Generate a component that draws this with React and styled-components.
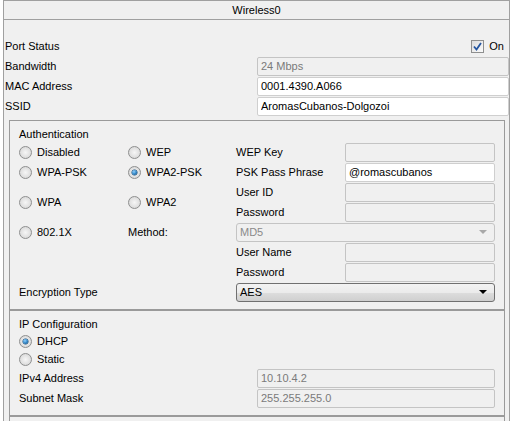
import React from "react";
import styled, { createGlobalStyle, css } from "styled-components";

const GlobalStyle = createGlobalStyle`
  html, body { margin: 0; padding: 0; background: #ffffff; overflow: hidden; }
  body { font-family: "Liberation Sans", Arial, sans-serif; font-size: 11px; color: #000; }
`;

const Panel = styled.div`
  margin-left: 3px;
  width: 507px;
  height: 440px;
  box-sizing: border-box;
  border: 1px solid #a0a0a0;
  border-bottom: none;
  background: #f0f0f0;
  display: flex;
  flex-direction: column;
`;

const Header = styled.div`
  height: 18px;
  border-bottom: 1px solid #a0a0a0;
  display: flex;
  align-items: center;
  justify-content: center;
  font-size: 11px;
`;

const TopSection = styled.div`
  padding: 16px 0 0 1px;
  display: flex;
  flex-direction: column;
`;

const Row = styled.div`
  height: 20px;
  display: flex;
  align-items: center;
  justify-content: space-between;
`;

const Label = styled.span`
  white-space: nowrap;
  line-height: 14px;
`;

const Field = styled.input`
  box-sizing: border-box;
  width: ${(p) => p.$w || 252}px;
  height: 19px;
  margin: 0;
  padding: 0 3px;
  border: 1px solid ${(p) => (p.disabled ? "#c4c4c4" : "#cfcfcf")};
  border-radius: 2px;
  background: ${(p) => (p.disabled ? "#f0f0f0" : "#ffffff")};
  color: ${(p) => (p.disabled ? "#7a7a7a" : "#000")};
  font-family: "Liberation Sans", Arial, sans-serif;
  font-size: 11px;
  outline: none;
  -webkit-text-fill-color: ${(p) => (p.disabled ? "#7a7a7a" : "#000")};
  opacity: 1;
`;

const CheckWrap = styled.label`
  display: flex;
  align-items: center;
  gap: 5px;
  padding-right: 5px;
`;

const CheckBox = styled.span`
  width: 13px;
  height: 13px;
  box-sizing: border-box;
  border: 1px solid #8e8f8f;
  background: linear-gradient(135deg, #dcdcdc, #fbfbfb);
  display: flex;
  align-items: center;
  justify-content: center;
`;

const Group = styled.div`
  margin: ${(p) => (p.$first ? "4px" : "0")} 4px 0 5px;
  border: 1px solid #9a9a9a;
  padding: 5px 9px 7px 9px;
  display: flex;
  flex-direction: column;
  ${(p) =>
    p.$grow &&
    css`
      flex: 1;
    `}
`;

const GroupTitle = styled.div`
  height: 16px;
  line-height: 16px;
`;

const AuthGrid = styled.div`
  display: grid;
  grid-template-columns: 109px 108px 109px 150px;
  grid-auto-rows: 20px;
  align-items: center;
`;

const Cell = styled.div`
  grid-column: ${(p) => p.$col};
  grid-row: ${(p) => p.$row};
  display: flex;
  align-items: center;
`;

const RadioLabel = styled.label`
  display: flex;
  align-items: center;
  gap: 5px;
  height: ${(p) => p.$h || 20}px;
`;

const RadioDot = styled.span`
  width: 13px;
  height: 13px;
  box-sizing: border-box;
  border-radius: 50%;
  border: 1px solid #8e8f8f;
  background: radial-gradient(circle at 50% 50%, #f6f6f6 0%, #e2e2e2 55%, #cfcfcf 100%);
  position: relative;
  flex: none;
  ${(p) =>
    p.$on &&
    css`
      &::after {
        content: "";
        position: absolute;
        left: 3px;
        top: 3px;
        width: 5px;
        height: 5px;
        border-radius: 50%;
        background: radial-gradient(circle at 40% 35%, #8fd0ff 0%, #2a7fc0 55%, #0d3f6e 100%);
        box-shadow: 0 0 0 0.5px #1b4f7a;
      }
    `}
`;

const Select = styled.div`
  box-sizing: border-box;
  width: 259px;
  height: 19px;
  padding: 0 3px;
  display: flex;
  align-items: center;
  justify-content: space-between;
  border-radius: 3px;
  ${(p) =>
    p.disabled
      ? css`
          border: 1px solid #c4c4c4;
          background: #f0f0f0;
          color: #8a8a8a;
        `
      : css`
          border: 1px solid #707070;
          background: linear-gradient(#f3f3f3 0%, #ebebeb 50%, #dddddd 51%, #cfcfcf 100%);
          color: #000;
        `}
`;

const Arrow = styled.span`
  width: 0;
  height: 0;
  margin-right: 4px;
  border-left: 4px solid transparent;
  border-right: 4px solid transparent;
  border-top: 4px solid ${(p) => (p.$muted ? "#a8a8a8" : "#000")};
`;

const OptionList = styled.div`
  display: flex;
  flex-direction: column;
`;

const IpGrid = styled.div`
  display: grid;
  grid-template-columns: 238px 238px;
  grid-auto-rows: 20px;
  align-items: center;
`;

const Radio = ({ on, children, h }) => (
  <RadioLabel $h={h}>
    <RadioDot $on={on} />
    <Label>{children}</Label>
  </RadioLabel>
);

export default function App() {
  return (
    <>
      <GlobalStyle />
      <Panel>
        <Header>Wireless0</Header>
        <TopSection>
          <Row>
            <Label>Port Status</Label>
            <CheckWrap>
              <CheckBox>
                <svg width="9" height="9" viewBox="0 0 9 9">
                  <path d="M1 4.5 L3.5 7.5 L8 1" fill="none" stroke="#2455a0" strokeWidth="1.8" />
                </svg>
              </CheckBox>
              <Label>On</Label>
            </CheckWrap>
          </Row>
          <Row>
            <Label>Bandwidth</Label>
            <Field disabled readOnly value="24 Mbps" />
          </Row>
          <Row>
            <Label>MAC Address</Label>
            <Field readOnly value="0001.4390.A066" />
          </Row>
          <Row>
            <Label>SSID</Label>
            <Field readOnly value="AromasCubanos-Dolgozoi" />
          </Row>
        </TopSection>

        <Group $first>
          <GroupTitle>Authentication</GroupTitle>
          <AuthGrid>
            <Cell $col="1" $row="1"><Radio>Disabled</Radio></Cell>
            <Cell $col="2" $row="1"><Radio>WEP</Radio></Cell>
            <Cell $col="3" $row="1"><Label>WEP Key</Label></Cell>
            <Cell $col="4" $row="1"><Field $w={150} disabled readOnly value="" /></Cell>

            <Cell $col="1" $row="2"><Radio>WPA-PSK</Radio></Cell>
            <Cell $col="2" $row="2"><Radio on>WPA2-PSK</Radio></Cell>
            <Cell $col="3" $row="2"><Label>PSK Pass Phrase</Label></Cell>
            <Cell $col="4" $row="2"><Field $w={150} readOnly value="@romascubanos" /></Cell>

            <Cell $col="1" $row="3 / span 2"><Radio>WPA</Radio></Cell>
            <Cell $col="2" $row="3 / span 2"><Radio>WPA2</Radio></Cell>
            <Cell $col="3" $row="3"><Label>User ID</Label></Cell>
            <Cell $col="4" $row="3"><Field $w={150} disabled readOnly value="" /></Cell>
            <Cell $col="3" $row="4"><Label>Password</Label></Cell>
            <Cell $col="4" $row="4"><Field $w={150} disabled readOnly value="" /></Cell>

            <Cell $col="1" $row="5"><Radio>802.1X</Radio></Cell>
            <Cell $col="2" $row="5"><Label>Method:</Label></Cell>
            <Cell $col="3 / span 2" $row="5">
              <Select disabled>
                <span>MD5</span>
                <Arrow $muted />
              </Select>
            </Cell>

            <Cell $col="3" $row="6"><Label>User Name</Label></Cell>
            <Cell $col="4" $row="6"><Field $w={150} disabled readOnly value="" /></Cell>
            <Cell $col="3" $row="7"><Label>Password</Label></Cell>
            <Cell $col="4" $row="7"><Field $w={150} disabled readOnly value="" /></Cell>

            <Cell $col="1 / span 2" $row="8"><Label>Encryption Type</Label></Cell>
            <Cell $col="3 / span 2" $row="8">
              <Select>
                <span>AES</span>
                <Arrow />
              </Select>
            </Cell>
          </AuthGrid>
        </Group>

        <Group>
          <GroupTitle>IP Configuration</GroupTitle>
          <OptionList>
            <Radio on h={18}>DHCP</Radio>
            <Radio h={18}>Static</Radio>
          </OptionList>
          <IpGrid>
            <Label>IPv4 Address</Label>
            <Field $w={238} disabled readOnly value="10.10.4.2" />
            <Label>Subnet Mask</Label>
            <Field $w={238} disabled readOnly value="255.255.255.0" />
          </IpGrid>
        </Group>

        <Group $grow />
      </Panel>
    </>
  );
}
